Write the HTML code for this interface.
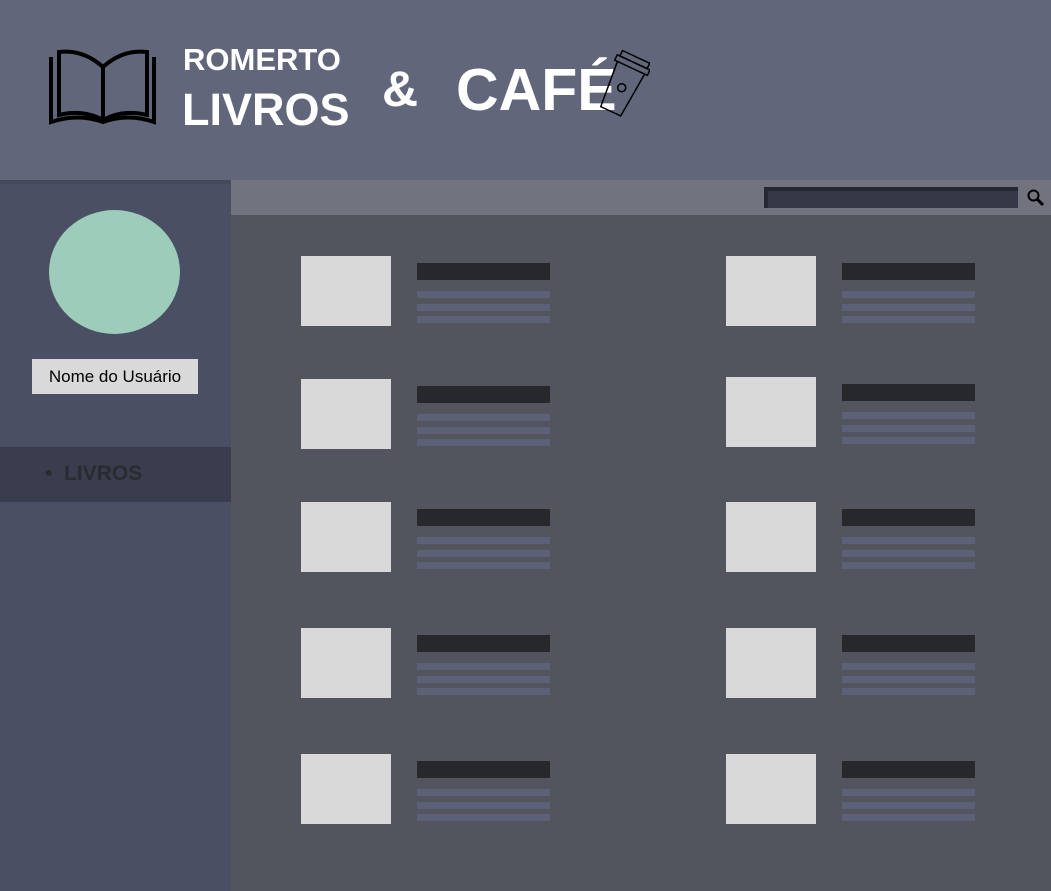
<!DOCTYPE html><html><head><style>
body{margin:0;width:1051px;height:891px;position:relative;overflow:hidden;background:#52555e;font-family:"Liberation Sans",sans-serif}
.a{position:absolute}
.img{position:absolute;width:90px;height:70px;background:#d9d9d9}
.t{position:absolute;width:133px;height:17px;background:#27282c}
.l{position:absolute;width:133px;height:7px;background:#5d6178}
</style></head><body>
<div class="a" style="left:0;top:0;width:1051px;height:180px;background:#61667a"></div>
<svg class="a" style="left:48px;top:47px" width="110" height="80" viewBox="0 0 110 80" fill="none" stroke="#000" stroke-width="4"><path d="M3 10 V75 Q30 66 55 75 Q80 66 106 75 V10"/><path d="M11 5 V68 Q35 62 55 73 V20 Q35 2 11 5Z"/><path d="M99 5 V68 Q75 62 55 73 V20 Q75 2 99 5Z"/></svg>
<div class="a" style="left:183px;top:42px;color:#fff;font-weight:bold;font-size:31px">ROMERTO</div>
<div class="a" style="left:182px;top:84px;color:#fff;font-weight:bold;font-size:45px">LIVROS</div>
<div class="a" style="left:382px;top:60px;color:#fff;font-weight:bold;font-size:50px">&amp;</div>
<div class="a" style="left:456px;top:56px;color:#fff;font-weight:bold;font-size:59px">CAFÉ</div>
<svg class="a" style="left:596px;top:48px" width="54" height="74" viewBox="0 0 54 74" fill="none" stroke="#000" stroke-width="1.5"><g transform="rotate(25 27 37)"><rect x="12" y="6" width="30" height="6"/><rect x="9" y="12" width="36" height="6"/><path d="M12 18 L16 66 H38 L42 18"/><circle cx="27" cy="40" r="4"/></g></svg>
<div class="a" style="left:0;top:180px;width:231px;height:711px;background:#4a4f63;border-top:4px solid #444a5c;box-sizing:border-box"></div>
<div class="a" style="left:49px;top:210px;width:131px;height:124px;border-radius:50%;background:#9dccbb"></div>
<div class="a" style="left:32px;top:359px;width:166px;height:35px;background:#d9d9d9;font-size:17px;line-height:35px;text-align:center;color:#000">Nome do Usuário</div>
<div class="a" style="left:0;top:447px;width:231px;height:55px;background:#393d4d"></div>
<div class="a" style="left:45px;top:462px;color:#2a2b30;font-weight:bold;font-size:21px">• &nbsp;LIVROS</div>
<div class="a" style="left:231px;top:180px;width:820px;height:35px;background:#71747f"></div>
<div class="a" style="left:764px;top:187px;width:254px;height:21px;background:#343847;border-top:4px solid #252936;border-left:4px solid #252936;box-sizing:border-box"></div>
<svg class="a" style="left:1027px;top:189px" width="18" height="18" viewBox="0 0 18 18"><circle cx="6.5" cy="6.5" r="5" fill="none" stroke="#000" stroke-width="2"/><path d="M10 10 L16 16" stroke="#000" stroke-width="3"/></svg>
<div id="c"></div>
<script>
var h='',L=[256,379,502,628,754],R=[256,377,502,628,754];
function card(x,y){h+='<div class="img" style="left:'+x+'px;top:'+y+'px"></div><div class="t" style="left:'+(x+116)+'px;top:'+(y+7)+'px"></div>';[35,48,60].forEach(function(d){h+='<div class="l" style="left:'+(x+116)+'px;top:'+(y+d)+'px"></div>'});}
L.forEach(function(y){card(301,y)});R.forEach(function(y){card(726,y)});
document.getElementById('c').innerHTML=h;
</script>
</body></html>
